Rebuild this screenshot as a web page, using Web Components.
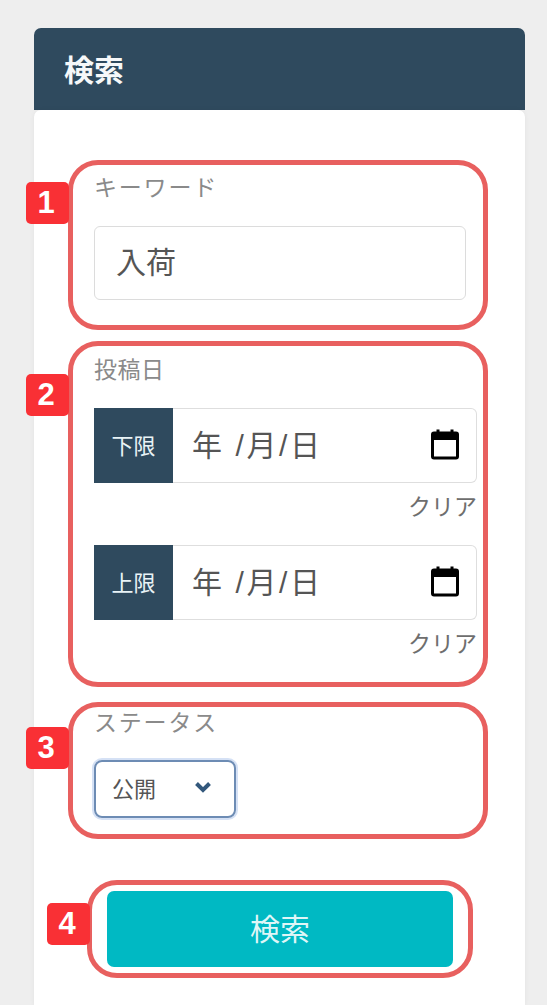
<!DOCTYPE html>
<html lang="ja">
<head>
<meta charset="utf-8">
<title>検索</title>
<style>
    html, body { margin: 0; height: 100%; }
    body {
        background: #eeeeee;
        font-family: "Liberation Sans", "Noto Sans CJK JP", sans-serif;
        overflow: hidden;
    }
</style>
</head>
<body>
<search-card heading="検索">
    <anno-box num="1" style="margin-bottom:11px;--pad:7px 17px 25px 21px">
        <field-label style="--spacing:1.8px;--gap:21px">キーワード</field-label>
        <text-box>入荷</text-box>
    </anno-box>
    <anno-box num="2" style="margin-bottom:15px;--pad:8px 6px 0 21px;--badge-top:28px">
        <field-label style="--spacing:0.5px;--gap:21px">投稿日</field-label>
        <date-range label="下限"></date-range>
        <date-range label="上限"></date-range>
    </anno-box>
    <anno-box num="3" style="margin-bottom:41px;--pad:0 6px 16px 21px;--badge-top:20px">
        <field-label style="--spacing:1.8px">ステータス</field-label>
        <select-box>公開</select-box>
    </anno-box>
    <anno-box num="4" style="margin-left:19px;width:386px;--pad:6px 15px 6px 15px;--badge-left:-45px;--badge-top:18px">
        <search-button>検索</search-button>
    </anno-box>
</search-card>

<script>
class SearchCard extends HTMLElement {
    constructor() {
        super();
        this.attachShadow({ mode: 'open' });
        this.shadowRoot.innerHTML = `
<style>
    :host {
        display: block;
        box-sizing: border-box;
        height: 1005px;
        padding: 28px 22px 0 34px;
    }
    .head {
        box-sizing: border-box;
        height: 82px;
        padding: 0 0 2px 30px;
        display: flex;
        align-items: center;
        background: #2f4a5e;
        border-radius: 7px 7px 0 0;
        color: #f6f8f9;
        font-size: 30px;
        font-weight: 700;
    }
    .body {
        box-sizing: border-box;
        height: 895px;
        padding: 50px 0 0 34px;
        background: #fff;
        border-radius: 7px 7px 0 0;
        box-shadow: 0 0 5px rgba(0, 0, 0, .05);
    }
</style>
<div class="head"></div>
<div class="body"><slot></slot></div>`;
        this.shadowRoot.querySelector('.head').textContent = this.getAttribute('heading');
    }
}

class AnnoBox extends HTMLElement {
    constructor() {
        super();
        this.attachShadow({ mode: 'open' });
        this.shadowRoot.innerHTML = `
<style>
    :host {
        display: block;
        position: relative;
        box-sizing: border-box;
        width: 420px;
        padding: var(--pad);
        border: 5px solid #e8605f;
        border-radius: 30px;
    }
    .badge {
        position: absolute;
        left: var(--badge-left, -47px);
        top: var(--badge-top, 17px);
        box-sizing: border-box;
        width: 43px;
        height: 42px;
        padding-right: 3px;
        display: flex;
        align-items: center;
        justify-content: center;
        background: #f93035;
        border-radius: 5px;
        color: #fff;
        font-size: 31px;
        font-weight: 700;
    }
</style>
<span class="badge"></span>
<slot></slot>`;
        this.shadowRoot.querySelector('.badge').textContent = this.getAttribute('num');
    }
}

class FieldLabel extends HTMLElement {
    constructor() {
        super();
        this.attachShadow({ mode: 'open' });
        this.shadowRoot.innerHTML = `
<style>
    :host {
        display: block;
        height: 33px;
        line-height: 33px;
        margin-bottom: var(--gap, 20px);
        color: #8a8a8a;
        font-size: 23px;
        letter-spacing: var(--spacing, 0);
        white-space: nowrap;
    }
</style>
<slot></slot>`;
    }
}

class TextBox extends HTMLElement {
    constructor() {
        super();
        this.attachShadow({ mode: 'open' });
        this.shadowRoot.innerHTML = `
<style>
    :host {
        display: flex;
        align-items: center;
        box-sizing: border-box;
        height: 74px;
        padding: 0 0 6px 21px;
        border: 1px solid #dcdcdc;
        border-radius: 6px;
        color: #555;
        font-size: 30px;
    }
</style>
<slot></slot>`;
    }
}

class DateRange extends HTMLElement {
    constructor() {
        super();
        this.attachShadow({ mode: 'open' });
        this.shadowRoot.innerHTML = `
<style>
    :host { display: block; margin-bottom: 21px; }
    .row {
        display: flex;
        height: 75px;
        box-sizing: border-box;
        border: 1px solid #dedede;
        border-left: 0;
        border-radius: 0 6px 6px 0;
    }
    .addon {
        box-sizing: border-box;
        width: 79px;
        margin: -1px 0;
        padding-bottom: 4px;
        display: flex;
        align-items: center;
        justify-content: center;
        background: #2f4a5e;
        color: #e9f3f6;
        font-size: 22px;
    }
    .value {
        flex: 1;
        display: flex;
        align-items: center;
        padding: 0 0 6px 19px;
        color: #555;
        font-size: 30px;
        letter-spacing: 2.6px;
        white-space: pre;
    }
    svg { margin: 0 16px 4px 0; align-self: center; }
    .clear {
        height: 34px;
        line-height: 34px;
        margin-top: 7px;
        text-align: right;
        color: #6e6e6e;
        font-size: 23px;
    }
</style>
<div class="row">
    <span class="addon"></span>
    <span class="value">年 /月/日</span>
    <svg width="30" height="32" viewBox="0 0 30 32" fill="none">
        <rect x="2.5" y="5" width="25" height="25" rx="1.5" stroke="#000" stroke-width="3"/>
        <rect x="2.5" y="5" width="25" height="7" fill="#000"/>
        <rect x="6.5" y="1.5" width="3" height="5" fill="#000"/>
        <rect x="20.5" y="1.5" width="3" height="5" fill="#000"/>
    </svg>
</div>
<div class="clear">クリア</div>`;
        this.shadowRoot.querySelector('.addon').textContent = this.getAttribute('label');
    }
}

class SelectBox extends HTMLElement {
    constructor() {
        super();
        this.attachShadow({ mode: 'open' });
        this.shadowRoot.innerHTML = `
<style>
    :host {
        display: flex;
        align-items: center;
        justify-content: space-between;
        box-sizing: border-box;
        width: 142px;
        height: 58px;
        padding: 0 22px 4px 16px;
        border: 2px solid #6d8cb4;
        border-radius: 8px;
        box-shadow: 0 0 0 2px #d5e1f5;
        color: #555;
        font-size: 22px;
    }
    svg { display: block; }
</style>
<slot></slot>
<svg width="18" height="12" viewBox="0 0 18 12" fill="none">
    <path d="M2.5 2.5 L9 9 L15.5 2.5" stroke="#33587c" stroke-width="4"/>
</svg>`;
    }
}

class SearchButton extends HTMLElement {
    constructor() {
        super();
        this.attachShadow({ mode: 'open' });
        this.shadowRoot.innerHTML = `
<style>
    :host {
        display: flex;
        align-items: center;
        justify-content: center;
        box-sizing: border-box;
        height: 76px;
        padding-bottom: 4px;
        background: #00b9c3;
        border-radius: 7px;
        color: #dff6f7;
        font-size: 30px;
    }
</style>
<slot></slot>`;
    }
}

customElements.define('search-card', SearchCard);
customElements.define('anno-box', AnnoBox);
customElements.define('field-label', FieldLabel);
customElements.define('text-box', TextBox);
customElements.define('date-range', DateRange);
customElements.define('select-box', SelectBox);
customElements.define('search-button', SearchButton);
</script>
</body>
</html>
